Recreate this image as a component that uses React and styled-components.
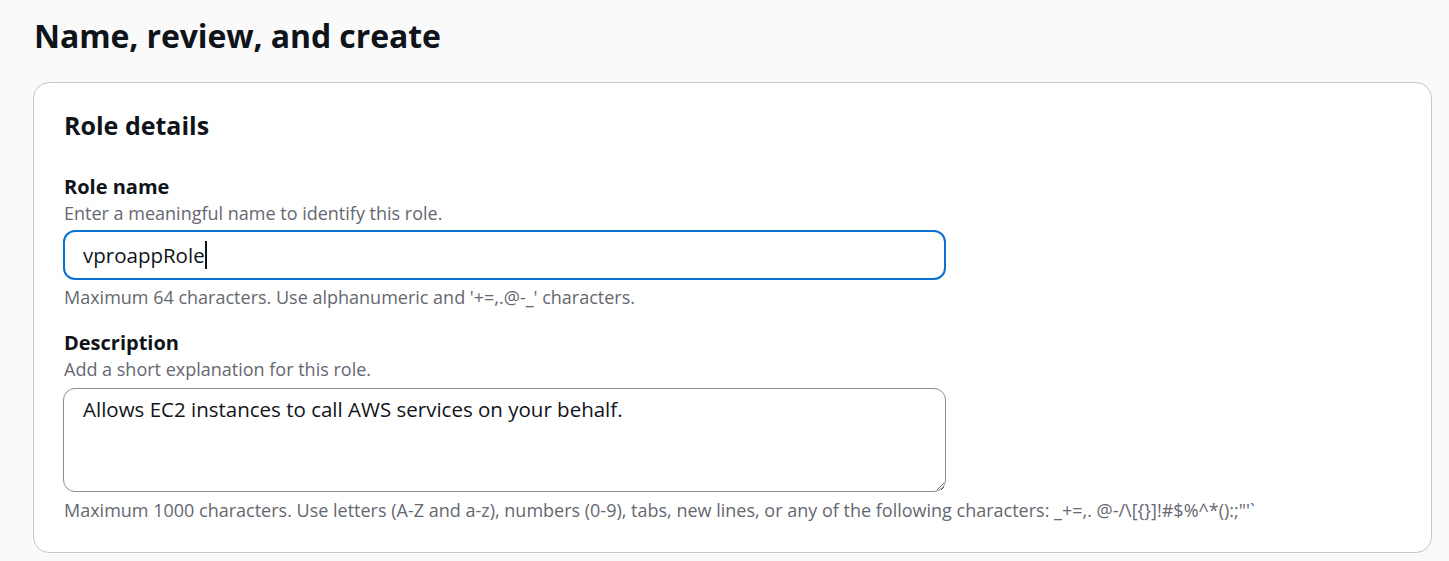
import React from 'react';
import styled, { createGlobalStyle } from 'styled-components';

const GlobalStyle = createGlobalStyle`
  html, body {
    margin: 0;
    padding: 0;
    background: #fafafa;
    font-family: "Open Sans", "Noto Sans", Arial, sans-serif;
    color: #0f141a;
  }
`;

const Page = styled.div`
  padding: 14px 17px 0 33px;
`;

const PageTitle = styled.h1`
  margin: 0 0 24px 1px;
  font-size: 32px;
  line-height: 44px;
  font-weight: 700;
  letter-spacing: -0.1px;
`;

const Card = styled.section`
  background: #ffffff;
  border: 1px solid #c6c6cd;
  border-radius: 16px;
  padding: 24px 30px 29px 30px;
`;

const CardTitle = styled.h2`
  margin: 0 0 30px;
  font-size: 25px;
  line-height: 36px;
  font-weight: 700;
`;

const Field = styled.div`
  display: flex;
  flex-direction: column;
  margin-bottom: ${p => (p.$last ? '0' : '19px')};
`;

const Label = styled.label`
  font-size: 20px;
  line-height: 27px;
  font-weight: 700;
`;

const Hint = styled.span`
  font-size: 18px;
  line-height: 26px;
  color: #656871;
`;

const InputWrap = styled.div`
  position: relative;
  width: 883px;
  margin: 4px 0 4px -1px;
`;

const Input = styled.input`
  box-sizing: border-box;
  display: block;
  width: 100%;
  height: 50px;
  padding: 0 18px;
  border: 2px solid #0972d3;
  border-radius: 12px;
  background: #fff;
  font-family: inherit;
  font-size: 20.5px;
  color: #0f141a;
  outline: none;
  caret-color: transparent;
`;

const Caret = styled.span`
  position: absolute;
  left: 142px;
  top: 11px;
  width: 1.5px;
  height: 28px;
  background: #0f141a;
`;

const TextArea = styled.textarea`
  box-sizing: border-box;
  display: block;
  width: 883px;
  height: 104px;
  margin: 6px 0 5px -1px;
  padding: 6px 19px;
  border: 1px solid #8c8c94;
  border-radius: 12px;
  background: #fff;
  font-family: inherit;
  font-size: 20.5px;
  line-height: 28px;
  color: #0f141a;
  resize: both;
  outline: none;
`;

export default function App() {
  return (
    <>
      <GlobalStyle />
      <Page>
        <PageTitle>Name, review, and create</PageTitle>
        <Card>
          <CardTitle>Role details</CardTitle>
          <Field>
            <Label>Role name</Label>
            <Hint>Enter a meaningful name to identify this role.</Hint>
            <InputWrap>
              <Input defaultValue="vproappRole" />
              <Caret />
            </InputWrap>
            <Hint>Maximum 64 characters. Use alphanumeric and '+=,.@-_' characters.</Hint>
          </Field>
          <Field $last>
            <Label>Description</Label>
            <Hint>Add a short explanation for this role.</Hint>
            <TextArea defaultValue="Allows EC2 instances to call AWS services on your behalf." />
            <Hint>
              Maximum 1000 characters. Use letters (A-Z and a-z), numbers (0-9), tabs, new lines, or any of the following characters: _+=,. @-/\[{'{}'}]!#$%^*():;"'`
            </Hint>
          </Field>
        </Card>
      </Page>
    </>
  );
}
